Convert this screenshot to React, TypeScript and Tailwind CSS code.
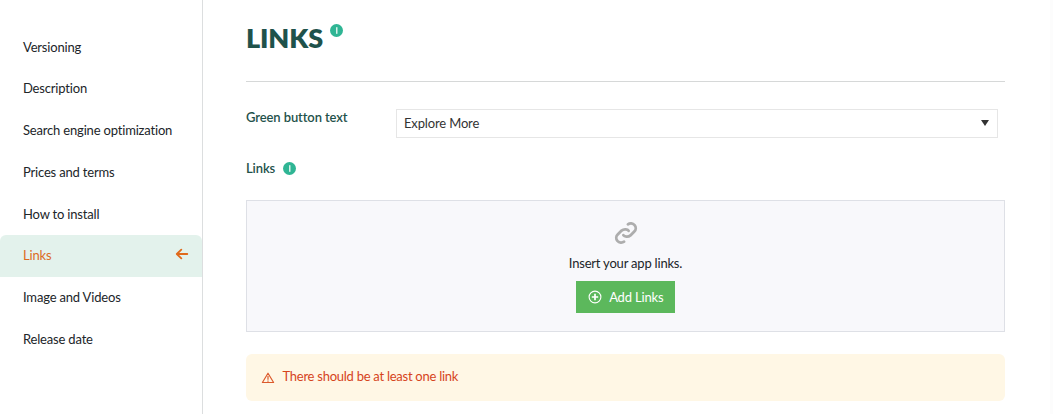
const items = [
  'Versioning',
  'Description',
  'Search engine optimization',
  'Prices and terms',
  'How to install',
  'Links',
  'Image and Videos',
  'Release date',
];

function InfoDot() {
  return (
    <svg viewBox="0 0 13 13" className="block size-[13px] shrink-0">
      <circle cx="6.5" cy="6.5" r="6.5" fill="#2fb594" />
      <rect x="6" y="3.2" width="1.5" height="6.6" fill="#d5f1e9" />
    </svg>
  );
}

function ArrowLeft() {
  return (
    <svg viewBox="0 0 14 12" className="-mt-0.5 h-3 w-3.5" fill="none" stroke="#e06a1c" strokeWidth="1.8" strokeLinecap="round" strokeLinejoin="round">
      <path d="M12.3 6H1.9M6.3 1.6 1.8 6l4.5 4.4" />
    </svg>
  );
}

function ChainIcon() {
  return (
    <svg viewBox="0 0 24 24" className="block size-6" fill="none" stroke="#adadad" strokeWidth="2.8" strokeLinecap="round" strokeLinejoin="round">
      <path d="M9.4 14.2c1 1.4 4.6 2.2 7 .2l3.9-3.9a4.7 4.7 0 0 0 .3-6.4c-1.8-2-4.7-2.2-6.7-.8" />
      <path d="M14.6 9.8c-1-1.4-4.6-2.2-7-.2l-3.9 3.9a4.7 4.7 0 0 0-.3 6.4c1.8 2 4.7 2.2 6.7.8" />
    </svg>
  );
}

function PlusCircle() {
  return (
    <svg viewBox="0 0 14 14" className="block size-3.5" fill="none" stroke="#fff">
      <circle cx="7" cy="7" r="5.9" strokeWidth="1.1" />
      <path d="M7 3.8v6.4M3.8 7h6.4" strokeWidth="1.7" />
    </svg>
  );
}

function WarningIcon() {
  return (
    <svg viewBox="0 0 14 12" className="block h-3 w-3.5" fill="none" stroke="#dc5a2c" strokeWidth="1.2" strokeLinejoin="round">
      <path d="M7 1.2 12.6 10.5H1.4Z" />
      <path d="M7 4v3.8M7 8.5v1.2" />
    </svg>
  );
}

export default function App() {
  return (
    <div className="flex h-[414px] w-[1053px] overflow-hidden bg-white font-['Lato',sans-serif] text-[13px] leading-5 tracking-[-0.18px] text-[#212529]">
      <nav className="w-[203px] shrink-0 border-r border-[#dcdedf] pt-[26.35px]">
        {items.map((label) => (
          <a
            key={label}
            className={
              label === 'Links'
                ? 'flex h-[41.71px] items-center justify-between rounded-t-md bg-[#e3f2ec] pr-[13px] pb-px pl-[23px] text-[#dc6a1f]'
                : 'flex h-[41.71px] items-center pb-px pl-[23px]'
            }
          >
            <span>{label}</span>
            {label === 'Links' && <ArrowLeft />}
          </a>
        ))}
      </nav>
      <main className="flex w-[802px] shrink-0 flex-col pl-[43px]">
        <header className="flex h-[82px] items-start gap-[7px] border-b border-[#d6d8d8] pt-6">
          <h1 className="text-[27px] leading-7 font-extrabold tracking-[-0.1px] text-[#1f524b]">LINKS</h1>
          <InfoDot />
        </header>
        <div className="mt-[27px] flex h-[29px] pr-[7px]">
          <label className="-mt-0.5 w-[150px] shrink-0 font-semibold tracking-[-0.1px] text-[#1f524b]">Green button text</label>
          <div className="flex flex-1 items-center justify-between border border-[#e6e6e6] pr-2 pb-px pl-[7px] tracking-[-0.15px] text-[#333]">
            <span>Explore More</span>
            <svg viewBox="0 0 8 6" className="h-1.5 w-2" fill="#333">
              <path d="M0 0h8L4 6Z" />
            </svg>
          </div>
        </div>
        <div className="mt-5 flex h-5 items-center gap-2 font-semibold tracking-[-0.1px] text-[#1f524b]">
          <span>Links</span>
          <InfoDot />
        </div>
        <section className="mt-[22px] flex h-[132px] flex-col items-center border border-[#dee0e6] bg-[#f8f8fb] pt-5">
          <ChainIcon />
          <p className="mt-2 tracking-[-0.2px]">Insert your app links.</p>
          <button className="mt-2 flex h-8 w-[99px] items-center justify-center gap-[7.5px] bg-[#5cb85c] text-white">
            <PlusCircle />
            <span>Add Links</span>
          </button>
        </section>
        <div className="mt-[22px] flex h-[47px] items-center gap-[7.5px] rounded-md bg-[#fff7e5] pl-[15px] tracking-[-0.26px] text-[#d6441c]">
          <WarningIcon />
          <span className="-mt-1">There should be at least one link</span>
        </div>
      </main>
      <div className="ml-auto w-[3px] bg-[#fcfcfc]" />
    </div>
  );
}
